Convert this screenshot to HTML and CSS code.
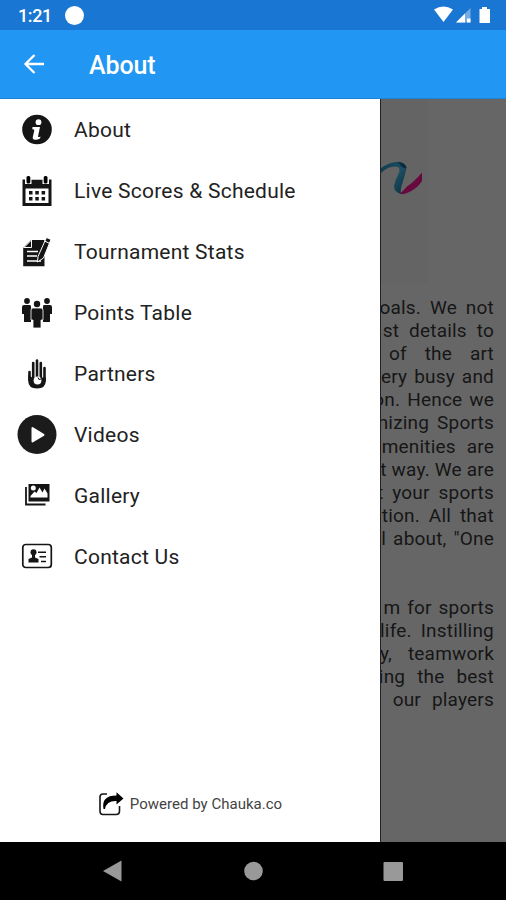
FILE: index.html
```html
<!DOCTYPE html>
<html lang="en">
<head>
<meta charset="utf-8">
<title>About</title>
<link rel="stylesheet" href="styles.css">
</head>
<body>
<div class="phone">
  <div class="status">
    <span class="clock">1:21</span><span class="dot"></span>
    <svg class="signals" width="60" height="20" viewBox="0 0 60 20" fill="#fff">
      <path d="M3 4.500Q12.500-1.500 22 4.500L12.500 17Z"/>
      <path d="M25 17.500L39.500 3V17.500Z" opacity=".4"/><path d="M25 17.500L34 8.500V17.500Z"/><path d="M36 13.500h3.500v4H36z"/>
      <path d="M51 2h5v2h3v14H48.500V4H51z"/>
    </svg>
  </div>
  <header class="appbar">
    <svg width="24" height="24" viewBox="0 0 24 24" fill="none" stroke="#fff" stroke-width="2.300"><path d="M23 12H4.500M13.500 3L4.500 12l9 9"/></svg>
    <h1>About</h1>
  </header>
  <main class="stage">
    <nav class="drawer">
      <a class="item"><span class="icon"><svg width="32" height="32" viewBox="0 0 32 32"><circle cx="16" cy="15.500" r="14.800" fill="#151515"/><circle cx="17.500" cy="8.200" r="2.900" fill="#fff"/><path d="M11.500 13h7.500l-2 9.500q0 1.200 2.500 0l-.5 2q-2.500 1.500-5 1.300-2.800-.3-2.200-2.800l1.500-6.500q.2-1.300-2-1.300z" fill="#fff"/></svg></span>About</a>
      <a class="item"><span class="icon"><svg width="32" height="32" viewBox="0 0 32 32"><path d="M1.500 4.500h29V31h-29z" fill="#151515"/><path d="M4.500 13.500h23v14.500h-23z" fill="#fff"/><path d="M4 0h6.500v9H4zM21.500 0H28v9h-6.500zM10.500 2h11v2.500h-11z" fill="#fff"/><rect x="5.500" y="1" width="3.800" height="7.500" rx="1.500"/><rect x="22.700" y="1" width="3.800" height="7.500" rx="1.500"/><path d="M8 16h3.500v3.500H8zm6.300 0h3.500v3.500h-3.500zm6.300 0h3.500v3.500h-3.500zM8 22h3.500v3.500H8zm6.300 0h3.500v3.500h-3.500zm6.300 0h3.500v3.500h-3.500z" fill="#151515"/></svg></span>Live Scores &amp; Schedule</a>
      <a class="item"><span class="icon"><svg width="32" height="32" viewBox="0 0 32 32"><path d="M10 4h13.500v26.300H2.200V12z" fill="#151515"/><path d="M3 11.500L10.500 4v7.500z" fill="#151515" stroke="#fff" stroke-width="1"/><path d="M6 15.500h11M6 20h10M6 25h14" stroke="#fff" stroke-width="1.300"/><path d="M17 20.500L25.500 1.500l4.500 2-7.500 18.500-6 4z" fill="#151515" stroke="#fff" stroke-width="1"/><path d="M23.500 5l5 2.300" stroke="#fff"/></svg></span>Tournament Stats</a>
      <a class="item"><span class="icon"><svg width="32" height="32" viewBox="0 0 32 32" fill="#151515"><circle cx="6" cy="4" r="2.900"/><circle cx="26" cy="4" r="2.900"/><path d="M1 10q0-2 2-2h6q1 0 1 2v15H3v-8H1zM31 10q0-2-2-2h-6q-1 0-1 2v15h7v-8h2z"/><path d="M10 13q0-2 2-2h8q2 0 2 2v10h-2v8h-8v-8h-2z" stroke="#fff" stroke-width=".8"/><circle cx="16" cy="7" r="3.200"/></svg></span>Points Table</a>
      <a class="item"><span class="icon"><svg width="32" height="32" viewBox="0 0 32 32"><path d="M8.500 14v8M12.200 5v17M16 2.500v20M19.800 5v17M23.500 10v13" stroke="#151515" stroke-width="2.600" stroke-linecap="round"/><path d="M7.200 17l4 2.500h13.600v3q0 8-8.800 8t-8.800-8z" fill="#151515"/><circle cx="16.500" cy="22.500" r="3.900" fill="#fff"/><path d="M17 19.500l1 2 2-.5" fill="none" stroke="#151515"/></svg></span>Partners</a>
      <a class="item"><span class="icon"><svg width="40" height="40" viewBox="0 0 40 40"><circle cx="20" cy="19.500" r="19.500" fill="#1b1b1b"/><path d="M15.500 13v13.500l11-6.700z" fill="#fff" stroke="#fff" stroke-width="2" stroke-linejoin="round"/></svg></span>Videos</a>
      <a class="item"><span class="icon"><svg width="32" height="32" viewBox="0 0 32 32"><path d="M5 7v17.500h19.500" fill="none" stroke="#151515" stroke-width="1.800"/><path d="M7.500 4H28.500V21.500H7.500z" fill="#151515"/><path d="M9.500 16l4-4.500 2 1.500 3-5.500 3 5 2-4 3 5v4h-17z" fill="#fff"/><circle cx="12.300" cy="8" r="2.500" fill="#fff"/></svg></span>Gallery</a>
      <a class="item"><span class="icon"><svg width="32" height="32" viewBox="0 0 32 32" fill="#151515"><rect x="1.800" y="3.500" width="28.500" height="23" rx="3" fill="none" stroke="#151515" stroke-width="1.700"/><circle cx="12.500" cy="11.300" r="3"/><path d="M11 13h3v3.500l3.500 1.500v3.500H7.500V18l3.500-1.500z"/><path d="M17 11.300h8M18.500 15.800h6.500M20 20.500h5" stroke="#151515" stroke-width="1.500"/></svg></span>Contact Us</a>
      <footer class="powered">
        <svg width="26" height="26" viewBox="0 0 26 26"><path d="M9 3H5Q2 3 2 6v14q0 3.500 3 3.500h13q3.500 0 3.500-3.500v-5" fill="none" stroke="#151515" stroke-width="1.600"/><path d="M5.500 18Q3 4.500 18.500 4.500V1.200l7 6.300-7 6V10Q8.500 9.500 7 18z" fill="#000"/></svg>
        <span>Powered by Chauka.co</span>
      </footer>
    </nav>
    <section class="page">
      <div class="logo"><svg width="46" height="40" viewBox="0 0 46 40"><defs><linearGradient id="teal" x2="1" y2="1"><stop stop-color="#10384c"/><stop offset=".5" stop-color="#1d4f63"/><stop offset="1" stop-color="#0b2c3d"/></linearGradient></defs><path d="M19 32.500Q22 30 26 25.500Q33 21 41 11.500V20Q36 28 26 32Q22 34 19 32.500z" fill="#67093f"/><path d="M0 7Q10 .5 18 .8Q25 2 25.500 7Q24 14 21.500 22Q19 28 20 33Q13 31 13 25Q14 19 17 14Q20 8 17 6Q9 4 0 12z" fill="url(#teal)"/><path d="M17 1Q25 2 25.500 7Q23 8 20 5z" fill="#0b2c3d"/></svg></div>
      <div class="copy">
        <p class="w1">oals. We not</p>
        <p class="w2">st details to</p>
        <p class="w3">of the art</p>
        <p class="w4">ery busy and</p>
        <p class="w5">on. Hence we</p>
        <p class="w6">nizing Sports</p>
        <p class="w7">menities are</p>
        <p class="w8">t way. We are</p>
        <p class="w9">t your sports</p>
        <p class="w10">tion. All that</p>
        <p class="w11">l about, "One</p>
      </div>
      <div class="copy second">
        <p class="w12">m for sports</p>
        <p class="w13">life. Instilling</p>
        <p class="w14">y, teamwork</p>
        <p class="w15">ing the best</p>
        <p class="w16">l our players</p>
      </div>
    </section>
  </main>
  <div class="sysnav">
    <svg width="24" height="24" viewBox="0 0 24 24" fill="#999"><path d="M2 12L20.500 1.500v21z"/></svg>
    <svg width="24" height="24" viewBox="0 0 24 24" fill="#999"><circle cx="12.500" cy="12" r="9.300"/></svg>
    <svg width="24" height="24" viewBox="0 0 24 24" fill="#999"><rect x="2.500" y="3" width="19.500" height="19" rx="1"/></svg>
  </div>
</div>
</body>
</html>
```
FILE: styles.css
```css
* { box-sizing: border-box; }
body { margin: 0; font-family: Roboto, sans-serif; }
.phone { width: 506px; height: 900px; display: flex; flex-direction: column; overflow: hidden; background: #000; }
.status { height: 30px; flex: none; background: #1976d2; display: flex; align-items: center; padding: 0 15px 0 18px; color: #fff; }
.clock { font-size: 18px; font-weight: 500; letter-spacing: -.4px; line-height: 30px; padding-top: 2px; }
.dot { width: 19px; height: 19px; border-radius: 50%; background: #fff; margin-left: 13px; }
.signals { margin-left: auto; }
.appbar { height: 69px; flex: none; background: #2196f3; border-bottom: 1px solid #1b83d8; display: flex; align-items: center; padding-left: 21px; gap: 44px; color: #fff; }
h1 { margin: 3px 0 0; font-size: 25px; font-weight: 500; letter-spacing: -.1px; }
.stage { height: 743px; flex: none; display: flex; }
.drawer { width: 381px; flex: none; background: #fff; border-right: 1px solid #222; display: flex; flex-direction: column; }
.item { height: 61px; display: flex; align-items: center; gap: 17px; padding-left: 17px; padding-top: 1px; font-size: 21px; letter-spacing: .24px; color: #222; }
.icon { width: 40px; height: 40px; display: flex; align-items: center; justify-content: center; }
.powered { margin-top: auto; margin-bottom: 25px; display: flex; align-items: center; justify-content: center; gap: 6px; font-size: 15px; letter-spacing: .02px; color: #444; }
.page { flex: 1; min-width: 0; background: #666; overflow: hidden; }
.logo { width: 47px; height: 184px; margin-bottom: 13px; padding-top: 62px; background: #646464; overflow: hidden; }
.copy { padding-right: 12px; display: flex; flex-direction: column; align-items: flex-end; font-size: 19px; line-height: 23.1px; letter-spacing: .2px; color: #161616; white-space: pre; }
.copy p { margin: 0; }
.second { margin-top: 46px; }
.w1 { word-spacing: 4px; }
.w2 { word-spacing: 5px; }
.w3 { word-spacing: 13px; }
.w4 { word-spacing: 2px; }
.w5 { word-spacing: 2px; }
.w6 { word-spacing: 3px; }
.w7 { word-spacing: 6px; }
.w8 { word-spacing: 0; }
.w9 { word-spacing: 4px; }
.w10 { word-spacing: 4px; }
.w11 { word-spacing: 2px; }
.w12 { word-spacing: 2px; }
.w13 { word-spacing: 4px; }
.w14 { word-spacing: 11px; }
.w15 { word-spacing: 7px; }
.w16 { word-spacing: 6px; }
.sysnav { height: 58px; flex: none; display: flex; justify-content: space-between; align-items: center; padding: 0 101px; background: #000; }
```
